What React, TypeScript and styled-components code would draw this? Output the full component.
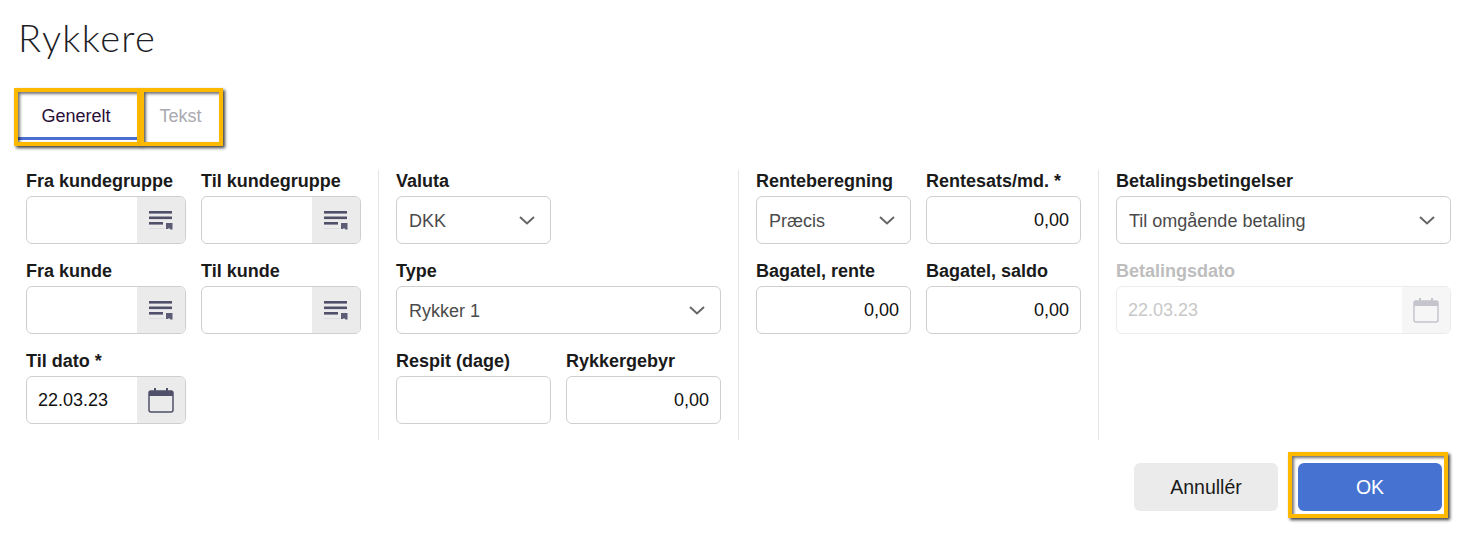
import { createGlobalStyle } from 'styled-components';
import styled from 'styled-components';

const GlobalStyle = createGlobalStyle`
  html, body {
    margin: 0;
    padding: 0;
    background: #fff;
    font-family: "Liberation Sans", Arial, sans-serif;
  }
`;

const highlight = `
  border: 4px solid #fdb900;
  box-shadow: 2px 2px 3px rgba(0, 0, 0, 0.75), inset 2px 2px 3px rgba(0, 0, 0, 0.55);
`;

const Page = styled.div`
  width: 1472px;
  height: 538px;
  overflow: hidden;
  box-sizing: border-box;
  padding: 14px 21px 0 14px;
`;

const Title = styled.h1`
  margin: 0 0 0 4px;
  height: 74px;
  font-family: Lato, sans-serif;
  font-weight: 300;
  font-size: 38px;
  line-height: 46px;
  letter-spacing: 1.4px;
  color: #1d1d26;
`;

const Tabs = styled.div`
  display: flex;
  height: 58px;
`;

const Tab = styled.div<{ $active?: boolean; $width: number }>`
  ${highlight}
  box-sizing: border-box;
  width: ${(p) => p.$width}px;
  height: 58px;
  margin-right: -1px;
  display: flex;
  align-items: center;
  justify-content: center;
  padding-bottom: 1px;
  padding-right: ${(p) => (p.$active ? '3px' : '2px')};
  font-size: 18px;
  color: ${(p) => (p.$active ? '#2a1038' : '#a9a9af')};
  background: linear-gradient(#4a6fd0, #4a6fd0) no-repeat left bottom / 100% ${(p) => (p.$active ? '3px' : '0')};
  background-origin: padding-box;
  background-position-y: calc(100% - 2px);
`;

const Columns = styled.div`
  display: flex;
  margin-top: 24px;
  padding-left: 12px;
`;

const Column = styled.div<{ $width: number }>`
  width: ${(p) => p.$width}px;
  height: 270px;
  padding-right: 17px;
  margin-right: 17px;
  border-right: 1px solid #e6e6e6;
  display: flex;
  flex-direction: column;
  &:last-child {
    border-right: none;
    margin-right: 0;
    padding-right: 0;
  }
`;

const Row = styled.div`
  display: flex;
  gap: 15px;
  height: 90px;
`;

const Field = styled.div<{ $width?: number }>`
  width: ${(p) => (p.$width ? `${p.$width}px` : '100%')};
  display: flex;
  flex-direction: column;
`;

const Label = styled.label<{ $disabled?: boolean }>`
  height: 26px;
  line-height: 22px;
  font-size: 18px;
  font-weight: 700;
  white-space: nowrap;
  color: ${(p) => (p.$disabled ? '#bdbdbd' : '#1a1a1a')};
`;

const InputBox = styled.div<{ $disabled?: boolean }>`
  box-sizing: border-box;
  height: 48px;
  border: 1px solid ${(p) => (p.$disabled ? '#ececec' : '#cfcfcf')};
  border-radius: 6px;
  display: flex;
  align-items: center;
  overflow: hidden;
  background: #fff;
`;

const Value = styled.span<{ $align?: string; $tone?: string; $date?: boolean }>`
  flex: 1;
  padding: 0 11px 0 ${(p) => (p.$date ? '11px' : '12px')};
  font-size: 18px;
  white-space: nowrap;
  text-align: ${(p) => p.$align || 'left'};
  color: ${(p) => p.$tone || '#111'};
`;

const SelectValue = styled(Value)`
  padding-top: 2px;
  color: #4a4a4a;
`;

const AddOn = styled.div<{ $disabled?: boolean }>`
  width: 48px;
  height: 100%;
  display: flex;
  align-items: center;
  justify-content: center;
  background: ${(p) => (p.$disabled ? '#f6f6f7' : '#ebebeb')};
`;

const Chevron = styled.svg`
  width: 16px;
  height: 9px;
  margin-right: 15px;
`;

const Footer = styled.div`
  display: flex;
  justify-content: flex-end;
  align-items: flex-start;
  gap: 10px;
  margin: 12px 3px 0 0;
`;

const CancelButton = styled.button`
  width: 144px;
  height: 48px;
  margin-top: 11px;
  border: none;
  border-radius: 6px;
  background: #ebebeb;
  color: #1a1a1a;
  font: 19.5px "Liberation Sans", Arial, sans-serif;
`;

const OkWrap = styled.div`
  ${highlight}
  padding: 7px 2px 3px 6px;
  display: flex;
`;

const OkButton = styled.button`
  width: 144px;
  height: 48px;
  border: none;
  border-radius: 6px;
  background: #4673d1;
  color: #fff;
  font: 19.5px "Liberation Sans", Arial, sans-serif;
`;

const ListIcon = () => (
  <svg width="24" height="20" viewBox="0 0 24 20">
    <rect x="0" y="1" width="23" height="2.6" fill="#50506a" />
    <rect x="0" y="6.5" width="23" height="2.6" fill="#50506a" />
    <rect x="0" y="12" width="14" height="2.6" fill="#50506a" />
    <rect x="0" y="18" width="16" height="1" fill="#dcdce0" />
    <path d="M17 13h6.5v6.5h-2l-1.5-1.5-1 1h-2z" fill="#5c5c74" />
  </svg>
);

const CalendarIcon = ({ disabled }: { disabled?: boolean }) => {
  const c = disabled ? '#c4c4cc' : '#50506a';
  return (
    <svg width="26" height="26" viewBox="0 0 26 26">
      <path d="M1 4h24v5H1z" fill={c} />
      <rect x="1" y="4" width="24" height="21" rx="2" fill="none" stroke={c} strokeWidth="1.5" />
      <rect x="6" y="1" width="2" height="4" fill={c} />
      <rect x="18" y="1" width="2" height="4" fill={c} />
    </svg>
  );
};

const ChevronIcon = () => (
  <Chevron viewBox="0 0 16 9">
    <path d="M1 1l7 6.5L15 1" fill="none" stroke="#666" strokeWidth="2" />
  </Chevron>
);

const LookupField = ({ label, width }: { label: string; width: number }) => (
  <Field $width={width}>
    <Label>{label}</Label>
    <InputBox>
      <Value />
      <AddOn>
        <ListIcon />
      </AddOn>
    </InputBox>
  </Field>
);

const SelectField = ({ label, value, width }: { label: string; value: string; width?: number }) => (
  <Field $width={width}>
    <Label>{label}</Label>
    <InputBox>
      <SelectValue>{value}</SelectValue>
      <ChevronIcon />
    </InputBox>
  </Field>
);

const NumberField = ({ label, value }: { label: string; value?: string }) => (
  <Field $width={155}>
    <Label>{label}</Label>
    <InputBox>
      <Value $align="right">{value}</Value>
    </InputBox>
  </Field>
);

const DateField = ({ label, value, width, disabled }: { label: string; value: string; width?: number; disabled?: boolean }) => (
  <Field $width={width}>
    <Label $disabled={disabled}>{label}</Label>
    <InputBox $disabled={disabled}>
      <Value $date $tone={disabled ? '#c8c8c8' : '#111'}>{value}</Value>
      <AddOn $disabled={disabled}>
        <CalendarIcon disabled={disabled} />
      </AddOn>
    </InputBox>
  </Field>
);

export default function App() {
  return (
    <Page>
      <GlobalStyle />
      <Title>Rykkere</Title>
      <Tabs>
        <Tab $active $width={127}>Generelt</Tab>
        <Tab $width={83}>Tekst</Tab>
      </Tabs>
      <Columns>
        <Column $width={335}>
          <Row>
            <LookupField label="Fra kundegruppe" width={160} />
            <LookupField label="Til kundegruppe" width={160} />
          </Row>
          <Row>
            <LookupField label="Fra kunde" width={160} />
            <LookupField label="Til kunde" width={160} />
          </Row>
          <Row>
            <DateField label="Til dato *" value="22.03.23" width={160} />
          </Row>
        </Column>
        <Column $width={325}>
          <Row>
            <SelectField label="Valuta" value="DKK" width={155} />
          </Row>
          <Row>
            <SelectField label="Type" value="Rykker 1" />
          </Row>
          <Row>
            <NumberField label="Respit (dage)" />
            <NumberField label="Rykkergebyr" value="0,00" />
          </Row>
        </Column>
        <Column $width={325}>
          <Row>
            <SelectField label="Renteberegning" value="Præcis" width={155} />
            <NumberField label="Rentesats/md. *" value="0,00" />
          </Row>
          <Row>
            <NumberField label="Bagatel, rente" value="0,00" />
            <NumberField label="Bagatel, saldo" value="0,00" />
          </Row>
        </Column>
        <Column $width={335}>
          <Row>
            <SelectField label="Betalingsbetingelser" value="Til omgående betaling" />
          </Row>
          <Row>
            <DateField label="Betalingsdato" value="22.03.23" disabled />
          </Row>
        </Column>
      </Columns>
      <Footer>
        <CancelButton>Annullér</CancelButton>
        <OkWrap>
          <OkButton>OK</OkButton>
        </OkWrap>
      </Footer>
    </Page>
  );
}
